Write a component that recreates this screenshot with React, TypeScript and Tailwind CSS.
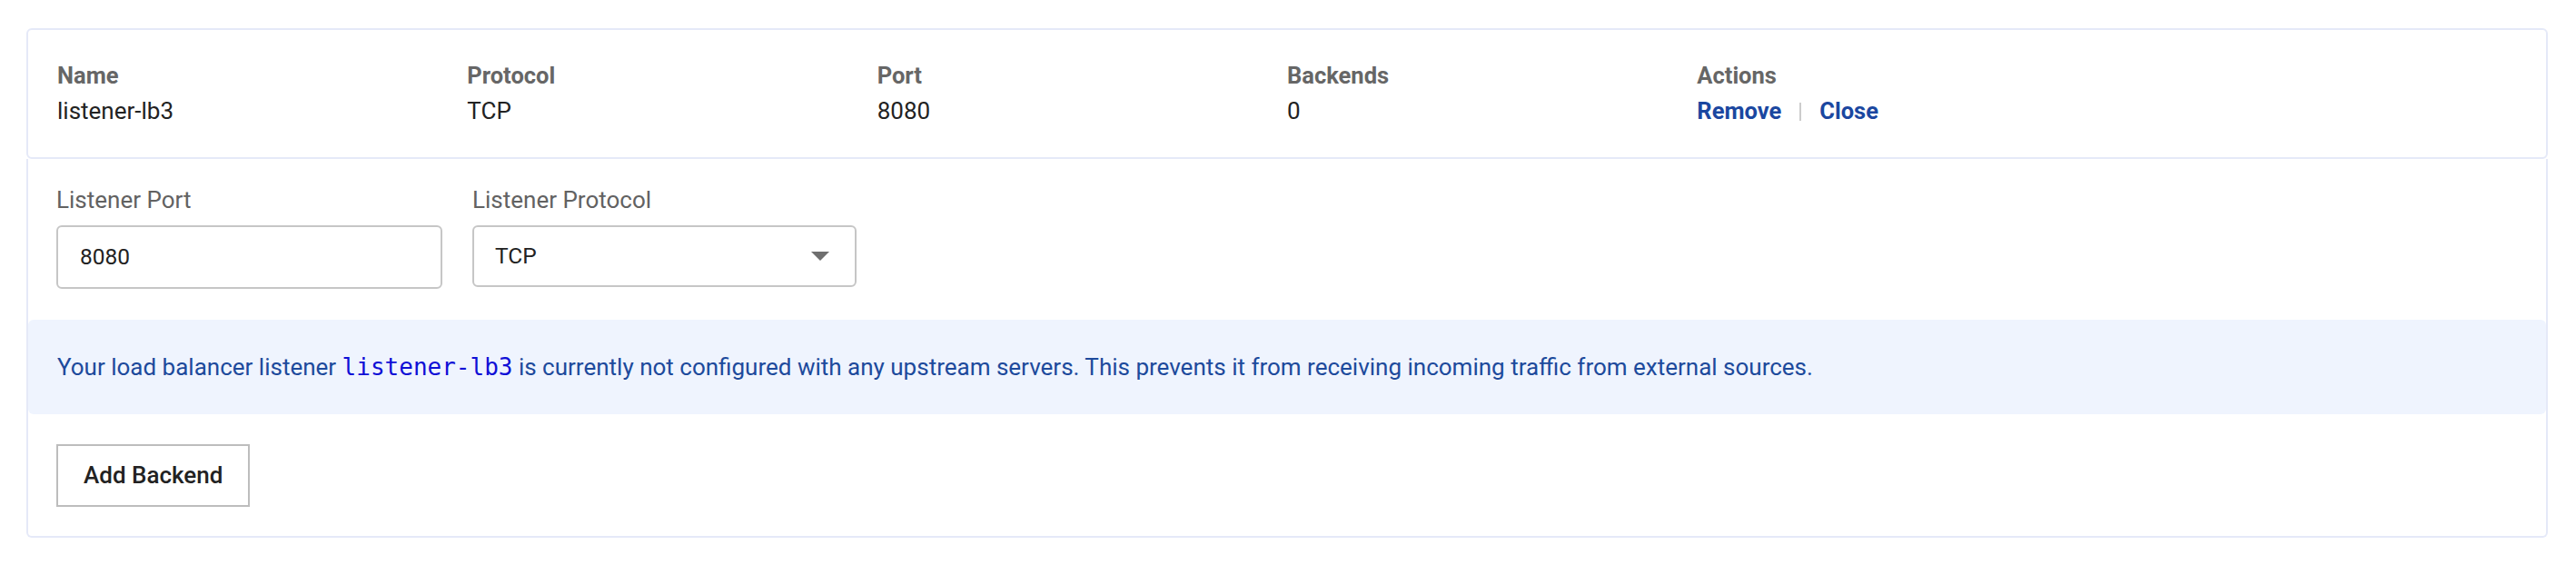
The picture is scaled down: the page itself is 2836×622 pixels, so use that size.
import React from "react"

const columns = [
  { label: "Name", value: "listener-lb3" },
  { label: "Protocol", value: "TCP" },
  { label: "Port", value: "8080" },
  { label: "Backends", value: "0" },
]

function ListenerHeader() {
  return (
    <div className="grid grid-cols-6 rounded-[6px] border-2 border-[#e5e9f8] bg-white px-[32px] py-[31px]">
      {columns.map(c => (
        <div key={c.label} className="flex flex-col">
          <span className="text-[25.5px] leading-[39px] font-bold text-[#666666]">{c.label}</span>
          <span className="text-[26px] leading-[39px] text-[#222222]">{c.value}</span>
        </div>
      ))}
      <div className="flex flex-col">
        <span className="text-[25.5px] leading-[39px] font-bold text-[#666666]">Actions</span>
        <div className="flex items-center text-[25.5px] leading-[39px] font-bold text-[#1b47a0]">
          <a href="#">Remove</a>
          <span className="mx-[20px] h-[20px] w-[2px] bg-[#cccccc]" />
          <a href="#">Close</a>
        </div>
      </div>
      <div />
    </div>
  )
}

function Field({ label, width, children }: { label: string; width: string; children: React.ReactNode }) {
  return (
    <div className={`flex flex-col ${width}`}>
      <span className="mb-[13px] text-[26px] leading-[30px] text-[#626262]">{label}</span>
      {children}
    </div>
  )
}

export default function App() {
  return (
    <div className="min-h-[622px] bg-white pl-[29px] pr-[31px] pt-[31px] font-[Roboto,sans-serif]">
      <ListenerHeader />
      <div className="rounded-b-[6px] border-x-2 border-b-2 border-[#e5e9f8] bg-white">
        {/* Listener settings */}
        <div className="flex items-start gap-[33px] px-[31px] pt-[30px] pb-[34px]">
          <Field label="Listener Port" width="w-[425px]">
            <div className="flex h-[70px] items-center rounded-[6px] border-2 border-[#c6c6c6] pl-[24px] text-[24.5px] text-[#222222]">
              8080
            </div>
          </Field>
          <Field label="Listener Protocol" width="w-[423px]">
            <div className="flex h-[68px] items-center justify-between rounded-[6px] border-2 border-[#c6c6c6] pl-[23px] pr-[28px] text-[24.5px] text-[#222222]">
              TCP
              <svg width="20" height="10" viewBox="0 0 20 10">
                <polygon points="0,0 20,0 10,10" fill="#6f6f6f" />
              </svg>
            </div>
          </Field>
        </div>

        {/* Notice */}
        <div className="flex h-[104px] items-center rounded-[6px] bg-[#eff4fe] pl-[32px] text-[26px] text-[#1d4a9c]">
          <p>
            Your load balancer listener{" "}
            <code className="font-['DejaVu_Sans_Mono',monospace] text-[26px] text-[#0f0fd6]">listener-lb3</code>{" "}
            is currently not configured with any upstream servers. This prevents it from receiving incoming traffic from external sources.
          </p>
        </div>

        <div className="px-[31px] pt-[33px] pb-[32px]">
          <button className="h-[69px] border-2 border-[#bdbdbd] bg-white px-[28px] text-[26px] font-medium text-[#222222]">
            Add Backend
          </button>
        </div>
      </div>
    </div>
  )
}
